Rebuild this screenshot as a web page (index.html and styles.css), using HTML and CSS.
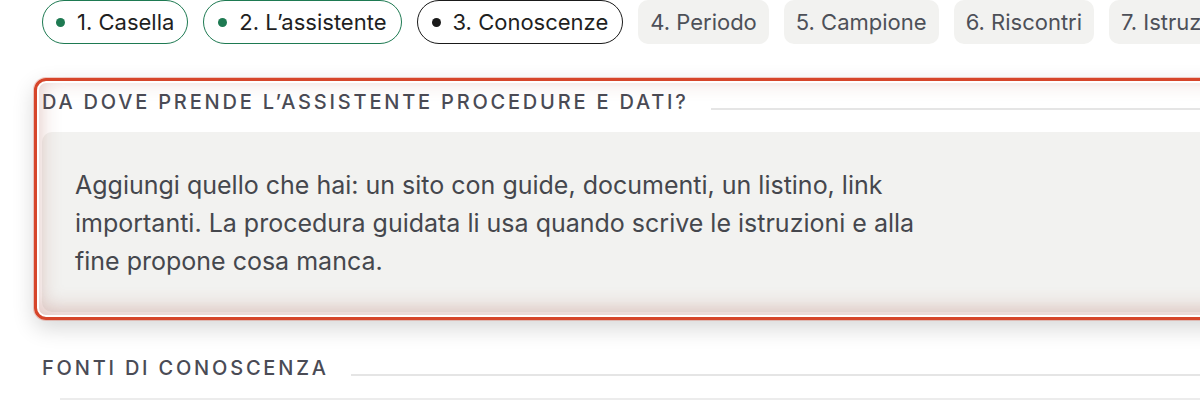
FILE: index.html
```html
<!DOCTYPE html>
<html lang="it">
<head>
    <meta charset="UTF-8">
    <meta name="viewport" content="width=device-width, initial-scale=1.0">
    <title>Configurazione assistente</title>
    <link rel="stylesheet" href="styles.css">
</head>
<body>

<div class="page">
    <nav class="steps">
        <a class="step done" href="#"><span class="dot"></span>1. Casella</a>
        <a class="step done" href="#"><span class="dot"></span>2. L’assistente</a>
        <a class="step current" href="#"><span class="dot"></span>3. Conoscenze</a>
        <a class="step" href="#">4. Periodo</a>
        <a class="step" href="#">5. Campione</a>
        <a class="step" href="#">6. Riscontri</a>
        <a class="step" href="#">7. Istruzioni</a>
    </nav>

    <!-- sezione evidenziata dal tour -->
    <section class="block spotlight">
        <h2 class="section-title"><span>Da dove prende l’assistente procedure e dati?</span></h2>
        <div class="note">
            <p>Aggiungi quello che hai: un sito con guide, documenti, un listino, link importanti. La procedura guidata li usa quando scrive le istruzioni e alla fine propone cosa manca.</p>
        </div>
    </section>

    <section class="block">
        <h2 class="section-title"><span>Fonti di conoscenza</span></h2>
        <div class="sources"></div>
    </section>
</div>

</body>
</html>
```

FILE: styles.css
```css
body {
    margin: 0;
    background: #fff;
    font-family: Inter, "Noto Sans", Arial, sans-serif;
    color: #222;
    overflow: hidden;
}

.page {
    width: 1300px;
    padding-left: 42px;
}

.steps {
    display: flex;
    gap: 15px;
    white-space: nowrap;
    height: 44px;
}

.step {
    display: flex;
    align-items: center;
    height: 44px;
    box-sizing: border-box;
    padding: 0 12px;
    border-radius: 10px;
    background-color: #f2f2f0;
    color: #4d5058;
    font-size: 22px;
    text-decoration: none;
}

.step .dot {
    width: 9px;
    height: 9px;
    border-radius: 50%;
    margin-right: 12px;
}

.step.done,
.step.current {
    background-color: #fff;
    border-radius: 22px;
    color: #1f1f1f;
    padding: 0 13px;
}

.step.done {
    border: 1.5px solid #1e7a52;
}

.step.done + .step.done {
    padding: 0 14px;
}

.step.done .dot {
    background-color: #1e7a52;
}

.step.current {
    border: 1.5px solid #1a1a1a;
    padding: 0 14px;
}

.step.current .dot {
    background-color: #1a1a1a;
}

.block {
    margin-top: 42px;
}

.block + .block {
    margin-top: 40px;
}

.spotlight {
    position: relative;
}

.spotlight::after {
    content: "";
    position: absolute;
    inset: -8px;
    border: 3px solid #d6452a;
    border-radius: 12px;
    pointer-events: none;
    box-shadow:
        0 0 0 1px rgba(214, 69, 42, 0.25),
        0 8px 22px rgba(0, 0, 0, 0.16),
        inset 0 0 0 2px #fff,
        inset 0 -5px 20px 3px rgba(170, 90, 80, 0.34);
}

.section-title {
    display: flex;
    align-items: center;
    margin: 0 0 14px;
    font-size: 20px;
    line-height: 32px;
    font-weight: 500;
    letter-spacing: 2.8px;
    text-transform: uppercase;
    color: #4a4b55;
}

.section-title::after {
    content: "";
    flex: 1;
    margin-left: 22px;
    margin-top: 14px;
    border-top: 2px solid #e5e5e5;
}

.note {
    background-color: #f2f2f0;
    border-radius: 10px;
    padding: 34px 33px 32px;
}

.note p {
    margin: 0;
    max-width: 860px;
    font-size: 25px;
    line-height: 38px;
    color: #45474d;
}

.sources {
    margin: 13px 0 0 18px;
    border-top: 2px solid #ececec;
    height: 20px;
}
```
